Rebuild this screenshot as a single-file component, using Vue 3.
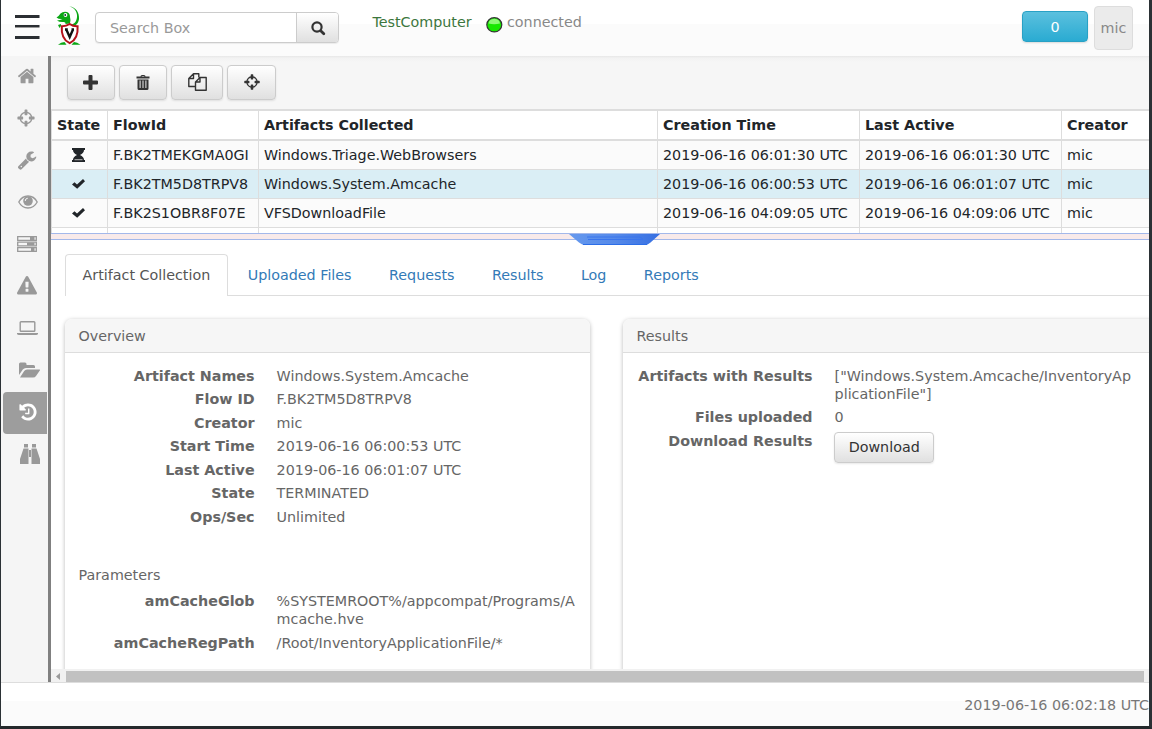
<script setup>
const icons = {
  home: '<path d="M1472 992v480q0 26-19 45t-45 19h-384v-384h-256v384h-384q-26 0-45-19t-19-45v-480q0-1 .5-3t.5-3l575-474 575 474q1 2 1 6zm223-69l-62 74q-8 9-21 11h-3q-13 0-21-7l-692-577-692 577q-12 8-24 7-13-2-21-11l-62-74q-8-10-7-23.5t11-21.5l719-599q32-26 76-26t76 26l244 204v-195q0-14 9-23t23-9h192q14 0 23 9t9 23v408l219 182q10 8 11 21.5t-7 23.5z"/>',
  target: '<path d="M1325 1024h-109q-26 0-45-19t-19-45v-128q0-26 19-45t45-19h109q-32-108-112.5-188.5t-188.5-112.5v109q0 26-19 45t-45 19h-128q-26 0-45-19t-19-45v-109q-108 32-188.5 112.5t-112.5 188.5h109q26 0 45 19t19 45v128q0 26-19 45t-45 19h-109q32 108 112.5 188.5t188.5 112.5v-109q0-26 19-45t45-19h128q26 0 45 19t19 45v109q108-32 188.5-112.5t112.5-188.5zm339-192v128q0 26-19 45t-45 19h-143q-37 161-154.5 278.5t-278.5 154.5v143q0 26-19 45t-45 19h-128q-26 0-45-19t-19-45v-143q-161-37-278.5-154.5t-154.5-278.5h-143q-26 0-45-19t-19-45v-128q0-26 19-45t45-19h143q37-161 154.5-278.5t278.5-154.5v-143q0-26 19-45t45-19h128q26 0 45 19t19 45v143q161 37 278.5 154.5t154.5 278.5h143q26 0 45 19t19 45z"/>',
  wrench: '<path d="M448 1472q0-26-19-45t-45-19-45 19-19 45 19 45 45 19 45-19 19-45zm644-420l-682 682q-37 37-90 37-52 0-91-37l-106-108q-38-36-38-90 0-53 38-91l681-681q39 98 114.5 173.5t173.5 114.5zm634-435q0 39-23 106-47 134-164.5 217.5t-258.5 83.5q-185 0-316.5-131.5t-131.5-316.5 131.5-316.5 316.5-131.5q58 0 121.5 16.5t107.5 46.5q16 11 16 28t-16 28l-293 169v224l193 107q5-3 79-48.5t135.5-81 70.5-35.5q15 0 23.5 10t8.5 25z"/>',
  warning: '<path d="M1024 1375v-190q0-14-9.5-23.5t-22.5-9.5h-192q-13 0-22.5 9.5t-9.5 23.5v190q0 14 9.5 23.5t22.5 9.5h192q13 0 22.5-9.5t9.5-23.5zm-2-374l18-459q0-12-10-19-13-11-24-11h-220q-11 0-24 11-10 7-10 21l17 457q0 10 10 16.5t24 6.5h185q14 0 23.5-6.5t10.5-16.5zm-14-934l768 1408q35 63-2 126-17 29-46.5 46t-63.5 17h-1536q-34 0-63.5-17t-46.5-46q-37-63-2-126l768-1408q17-31 47-49t65-18 65 18 47 49z"/>',
  history: '<path d="M1664 896q0 156-61 298t-164 245-245 164-298 61q-172 0-327-72.5t-264-204.5q-7-10-6.5-22.5t8.5-20.5l137-138q10-9 25-9 16 2 23 12 73 95 179 147t225 52q104 0 198.5-40.5t163.5-109.5 109.5-163.5 40.5-198.5-40.5-198.5-109.5-163.5-163.5-109.5-198.5-40.5q-98 0-188 35.5t-160 101.5l137 138q31 30 14 69-17 40-59 40h-448q-26 0-45-19t-19-45v-448q0-42 40-59 39-17 69 14l130 129q107-101 244.5-156.5t284.5-55.5q156 0 298 61t245 164 164 245 61 298zm-640-288v448q0 14-9 23t-23 9h-320q-14 0-23-9t-9-23v-64q0-14 9-23t23-9h224v-352q0-14 9-23t23-9h64q14 0 23 9t9 23z"/>',
  eye: '<path fill="none" stroke="currentColor" stroke-width="1.3" d="M.8 7Q4 1 10 1T19.2 7Q16 13 10 13T.8 7Z"/><circle cx="10" cy="6" r="4.8"/><path fill="none" stroke="#f5f5f5" stroke-width="1" d="M7.2 6A2.8 2.8 0 0 1 9.8 3.2"/>',
  server: '<path fill="none" stroke="currentColor" stroke-width="1.3" d="M.7.7H19.3V4.3H.7ZM.7 6.2H19.3V9.8H.7ZM.7 11.7H19.3V15.3H.7Z"/><path d="M13 1h4.5v3H13ZM10 6.5h7.5v3H10ZM14 12h3.5v3H14Z"/>',
  laptop: '<path fill="none" stroke="currentColor" stroke-width="1.4" d="M4 .8H17Q17.8.8 17.8 1.6V9.4Q17.8 10.2 17 10.2H4Q3.200 10.2 3.200 9.400V1.600Q3.200.8 4 .8Z"/><path d="M0 12H21V13Q20.500 14 19 14H2Q.5 14 0 13Z"/>',
  folder: '<path d="M0 13V2Q0 .5 1.500.5H6Q7.500.5 7.500 2V3H14.500Q16 3 16 4.500V6H7Q5 6 3.800 7.500L0 13Z"/><path d="M1 15.500L5.200 9Q6.200 7.500 8 7.500H20.500Q21.500 7.500 20.800 8.600L17 14Q16 15.500 14 15.500Z"/>',
  binoculars: '<path d="M4 0H8V3.500H4ZM12 0H16V3.500H12ZM3.500 4.500H8.500V20H0V15ZM11.500 4.500H16.500L20 15V20H11.500ZM9 6H11V13H9Z"/>',
  plus: '<path d="M5.500 1Q5.500 0 6.500 0H8.500Q9.500 0 9.500 1V5.500H14Q15 5.500 15 6.500V8.500Q15 9.500 14 9.500H9.500V14Q9.500 15 8.500 15H6.500Q5.500 15 5.500 14V9.500H1Q0 9.500 0 8.500V6.500Q0 5.500 1 5.500H5.500Z"/>',
  trash: '<path fill-rule="evenodd" d="M4.500 1.500Q4.500 0 6 0H8Q9.500 0 9.500 1.500H13.500V3.500H.5V1.500ZM5.700 1.500H8.300V1H5.700ZM1.500 4.500H12.500V13.500Q12.500 15 11 15H3Q1.500 15 1.500 13.500ZM3.600 5.500V13H4.600V5.500ZM6.500 5.500V13H7.500V5.500ZM9.400 5.500V13H10.400V5.500Z"/>',
  copy: '<path fill="none" stroke="currentColor" stroke-width="1.400" stroke-linejoin="round" d="M7 13.500H.8V5.500L5.500.8H10.800V4.500M5.500.8V5.500H.8M7.500 9L12 4.500H18.200V17.200H7.500ZM12 4.500V9H7.500"/>',
  check: '<path d="M0 5.500L2.500 3.200 5 5.500 11 0 13 2.200 5.200 9.800Z"/>',
  hourglass: '<path d="M0 0H13V2H12Q12 5 8 7 12 9 12 12H13V14H0V12H1Q1 9 5 7 1 5 1 2H0Z"/><path fill="#ccc" d="M2.500 11.300H10.500V12.200H2.500Z"/>',
  search: '<circle cx="6" cy="6" r="4.600" fill="none" stroke="currentColor" stroke-width="2.200"/><path stroke="currentColor" stroke-width="2.800" stroke-linecap="round" d="M9.700 9.700L12.800 12.800"/>',
}
const nav = [
  { id: 'home', box: '0 0 1792 1792', w: 20, h: 20 },
  { id: 'target', box: '0 0 1792 1792', w: 20, h: 20 },
  { id: 'wrench', box: '0 0 1792 1792', w: 20, h: 20 },
  { id: 'eye', box: '0 0 20 14', w: 20, h: 14 },
  { id: 'server', box: '0 0 20 16', w: 20, h: 16 },
  { id: 'warning', box: '0 0 1792 1792', w: 20, h: 20 },
  { id: 'laptop', box: '0 0 21 14', w: 21, h: 14 },
  { id: 'folder', box: '0 0 21 16', w: 21, h: 16 },
  { id: 'history', box: '0 0 1792 1792', w: 20, h: 20, active: true },
  { id: 'binoculars', box: '0 0 20 20', w: 20, h: 20 },
]
const tools = [
  { id: 'plus', box: '0 0 15 15', w: 15, h: 15 },
  { id: 'trash', box: '0 0 14 15', w: 14, h: 15 },
  { id: 'copy', box: '0 0 19 18', w: 19, h: 18 },
  { id: 'target', box: '0 0 1792 1792', w: 18, h: 18 },
]
const heads = ['State', 'FlowId', 'Artifacts Collected', 'Creation Time', 'Last Active', 'Creator']
const rows = [
  { icon: 'hourglass', cells: ['F.BK2TMEKGMA0GI', 'Windows.Triage.WebBrowsers', '2019-06-16 06:01:30 UTC', '2019-06-16 06:01:30 UTC', 'mic'] },
  { icon: 'check', on: true, cells: ['F.BK2TM5D8TRPV8', 'Windows.System.Amcache', '2019-06-16 06:00:53 UTC', '2019-06-16 06:01:07 UTC', 'mic'] },
  { icon: 'check', cells: ['F.BK2S1OBR8F07E', 'VFSDownloadFile', '2019-06-16 04:09:05 UTC', '2019-06-16 04:09:06 UTC', 'mic'] },
]
const tabs = ['Uploaded Files', 'Requests', 'Results', 'Log', 'Reports']
const overview = [
  ['Artifact Names', 'Windows.System.Amcache'],
  ['Flow ID', 'F.BK2TM5D8TRPV8'],
  ['Creator', 'mic'],
  ['Start Time', '2019-06-16 06:00:53 UTC'],
  ['Last Active', '2019-06-16 06:01:07 UTC'],
  ['State', 'TERMINATED'],
  ['Ops/Sec', 'Unlimited'],
]
const params = [
  ['amCacheGlob', '%SYSTEMROOT%/appcompat/Programs/Amcache.hve'],
  ['amCacheRegPath', '/Root/InventoryApplicationFile/*'],
]
</script>

<template>
  <div class="window">
    <header>
      <svg class="burger" width="25" height="24" viewBox="0 0 25 24"><path fill="#2b2f33" d="M0 0H24.500V3H0ZM0 10H24.500V12H0ZM0 21H24.500V24H0Z" /><path fill="#999" d="M0 12H24.500V13H0Z" /></svg>
      <svg class="logo" width="26" height="40" viewBox="0 0 26 40">
        <path fill="#0aa614" d="M13 .3C20 1 23.500 7 23 13 22.500 17.500 19.500 20 16.500 20.500L16 18.500C20 17 21.300 13 21 9 20.500 4.500 17.500 1.500 13 .3Z" />
        <path fill="#0aa614" d="M.5 11.500Q3 10 4.500 7.500 7 5.200 11 6 14 7 14 11 15 14 14 17.500L9.500 18Q10 16.500 8 16 3.500 16.500 1 14.500Q4 14 6.500 13Q3 13.500.5 11.500Z" />
        <circle cx="9.500" cy="9" r="1.900" fill="#fff" /><circle cx="9.200" cy="9" r=".9" fill="#123" />
        <path fill="#0aa614" d="M2 19L5 18V20L3.500 22ZM2 38.700Q5 36 8.500 36L10.500 38.700ZM24.500 38.700Q21 36 18 36L15.500 38.700Z" />
        <path fill="#fff" stroke="#b5121b" stroke-width="2" d="M5.800 20.300Q10 20.500 13.700 18Q17 20.500 21.600 20.300Q22.500 33 13.700 37.200Q4.800 33 5.800 20.300Z" />
        <path fill="none" stroke="#111" stroke-width="2.400" d="M10.300 23.500L13.700 31 17 23.500M9 23.500H11.800M15.500 23.500H18" />
      </svg>
      <div class="search"><span>Search Box</span><button class="btn"><svg width="15" height="15" viewBox="0 0 15 15" v-html="icons.search"></svg></button></div>
      <span class="client">TestComputer</span>
      <svg class="led" width="17" height="16" viewBox="0 0 17 16">
        <ellipse cx="8.300" cy="7.800" rx="7.500" ry="7.100" fill="#18e800" stroke="#333" stroke-width="1.200" />
        <path fill="#8dfa75" d="M2.500 6.500Q3 2 8.300 1.700 13.500 2 14 6.500 8 8 2.500 6.500Z" />
      </svg>
      <span class="status">connected</span>
      <button class="badge">0</button>
      <div class="user">mic</div>
    </header>
    <div class="middle">
      <nav>
        <a v-for="n in nav" :key="n.id" :class="['item', n.id, { active: n.active }]"><svg :width="n.w" :height="n.h" :viewBox="n.box" v-html="icons[n.id]"></svg></a>
      </nav>
      <main>
        <div class="toolbar">
          <button v-for="t in tools" :key="t.id" :class="['btn', t.id]"><svg :width="t.w" :height="t.h" :viewBox="t.box" v-html="icons[t.id]"></svg></button>
        </div>
        <div class="grid">
          <div class="row head"><div v-for="h in heads" :key="h">{{ h }}</div></div>
          <div v-for="r in rows" :key="r.cells[0]" :class="['row', { on: r.on }]">
            <div class="state">
              <svg v-if="r.icon === 'check'" width="13" height="10" viewBox="0 0 13 10" v-html="icons.check"></svg>
              <svg v-else width="13" height="14" viewBox="0 0 13 14" v-html="icons.hourglass"></svg>
            </div>
            <div v-for="(c, i) in r.cells" :key="i">{{ c }}</div>
          </div>
          <div class="row rest"><div v-for="h in heads" :key="h"></div></div>
        </div>
        <div class="splitter">
          <svg width="92" height="12" viewBox="0 0 92 12">
            <defs><linearGradient id="grip" x1="0" x2="1" y1="0" y2="0"><stop offset="0" stop-color="#6699ee" /><stop offset=".5" stop-color="#568ae9" /><stop offset="1" stop-color="#366fe2" /></linearGradient></defs>
            <path fill="url(#grip)" d="M0 0H91L81.500 8.500Q79 11 75 11H17Q13 11 10 8.500Z" />
            <path fill="none" stroke="#3975ee" d="M18 3H69Q73.500 3 73.500 5.500H19" /><path stroke="#2c6ee8" d="M14 10.500H78" />
          </svg>
        </div>
        <section class="detail">
          <div class="tabs"><a class="current">Artifact Collection</a><a v-for="t in tabs" :key="t">{{ t }}</a></div>
          <div class="cards">
            <article>
              <h2>Overview</h2>
              <dl><template v-for="[k, v] in overview" :key="k"><dt>{{ k }}</dt><dd>{{ v }}</dd></template></dl>
              <h3>Parameters</h3>
              <dl class="params"><template v-for="[k, v] in params" :key="k"><dt>{{ k }}</dt><dd>{{ v }}</dd></template></dl>
            </article>
            <article>
              <h2>Results</h2>
              <dl>
                <dt>Artifacts with Results</dt><dd>["Windows.System.Amcache/InventoryApplicationFile"]</dd>
                <dt>Files uploaded</dt><dd>0</dd>
                <dt>Download Results</dt><dd><button class="btn download">Download</button></dd>
              </dl>
            </article>
          </div>
        </section>
        <div class="scroll"><svg width="15" height="13" viewBox="0 0 15 13"><path fill="#999" d="M9 4V11L5 7.500Z" /></svg><div class="thumb"></div></div>
      </main>
    </div>
    <footer>2019-06-16 06:02:18 UTC</footer>
  </div>
</template>

<style>
body { margin: 0; overflow: hidden; }
</style>
<style scoped>
* { box-sizing: border-box; }
.window { width: 1152px; height: 729px; border: solid #2b3135; border-width: 0 3px 3px 1px; border-bottom-color: #24292b; display: flex; flex-direction: column; overflow: hidden; background: #fff; font: 14.3px/18px "DejaVu Sans", sans-serif; color: #666; }
svg { display: block; fill: currentColor; flex: none; }
button { font: inherit; letter-spacing: inherit; padding: 0; }
header { height: 56px; flex: none; display: flex; align-items: flex-start; background: linear-gradient(#fff 24px, #fbfbfb 24px); }
.burger { margin: 15px 0 0 13.500px; }
.logo { margin: 6px 0 0 16px; }
.search { margin: 12px 0 0 13.500px; width: 244px; height: 31px; display: flex; justify-content: space-between; border: 1px solid #ccc; border-radius: 4px; background: #fff; color: #999; line-height: 31px; padding-left: 14px; box-shadow: 0 1px 1px #0001; }
.btn { display: flex; align-items: center; justify-content: center; color: #333; border: 1px solid #ccc; border-radius: 4px; background: linear-gradient(#fff, #e0e0e0); box-shadow: 0 1px 2px #00000018; }
.search .btn { width: 42px; height: 29px; border-width: 0 0 0 1px; border-radius: 0 3px 3px 0; padding: 2px 0 0 1px; box-shadow: none; }
.client { color: #3c763d; margin: 13px 0 0 33.400px; width: 99.600px; }
.led { margin: 17px 0 0 14px; }
.status { margin: 13px 0 0 4px; color: #888; }
.badge { margin: 11px 0 0 auto; width: 66px; height: 31px; border: 1px solid #28a1c5; border-radius: 4px; background: linear-gradient(#5bc0de, #2aabd2); color: #fff; box-shadow: 0 1px 2px #0002; }
.user { margin: 6px 16px 0 6px; width: 39px; height: 44px; border: 1px solid #ddd; border-radius: 4px; background: #ebebeb; color: #888; text-align: center; line-height: 43px; }
.middle { height: 626px; flex: none; display: flex; }
nav { width: 50px; flex: none; background: #f5f5f5; border-right: 3px solid #808080; color: #999; }
.item { height: 42px; margin: 0 1px 0 2px; display: flex; align-items: center; justify-content: center; padding: 0 0 2px 3px; }
.item.target { padding: 0 0 2px 1px; }
.item.eye { padding-left: 5px; }
.item.server { padding: 0 0 3px 4px; }
.item.laptop { padding-left: 5px; }
.item.folder { padding: 0 0 3px 8px; }
.item.binoculars { padding-left: 9px; }
.item.history { padding-left: 5px; }
.active { background: #9d9d9d; color: #fff; border-radius: 4px 0 0 4px; }
main { flex: 1; min-width: 0; display: flex; flex-direction: column; }
.toolbar { height: 53px; flex: none; padding: 9px 0 0 16px; display: flex; gap: 4px; background: linear-gradient(#e7e7e7 0, #f2f2f2 2px, #f6f6f6 6px); }
.toolbar .btn { width: 48px; height: 35px; padding: 0 1px 1px 0; }
.toolbar .copy { width: 52px; padding-right: 0; }
.toolbar .target { width: 49px; padding-right: 0; }
.grid { height: 124px; flex: none; overflow: hidden; color: #212529; border-top: 2px solid #ddd; }
.row { display: grid; grid-template-columns: 57px 151px 399px 202px 202px 1fr; height: 29px; border-bottom: 1px solid #ddd; background: #fbfbfb; }
.row > div { border-right: 1px solid #ddd; padding-left: 5px; line-height: 28px; white-space: nowrap; }
.row > div:first-child { border-left: 1px solid #ddd; }
.row > div:last-child { border-right: 0; }
.row.head { height: 30px; border-bottom-width: 2px; background: #fff; font-weight: bold; }
.row.on { background: #daeef5; }
.row > .state:first-child { display: flex; align-items: center; justify-content: center; padding: 0 2px 0 0; }
.rest { background: #fff; }
.splitter { height: 7px; flex: none; border: 1px solid #a3b8ea; border-width: 1px 0; background: #f8eaea; padding-left: 518px; position: relative; z-index: 1; }
.detail { height: 429px; flex: none; overflow: hidden; padding: 14px 0 0 14px; }
.tabs { height: 42px; display: flex; border-bottom: 1px solid #ddd; color: #337ab7; }
.tabs a { padding: 12px 18px 0; margin-right: 1.400px; white-space: nowrap; }
.tabs .current { width: 163px; height: 42px; margin-right: 1.700px; padding: 11px 0 0 16.500px; border: 1px solid #ddd; border-bottom: 0; border-radius: 4px 4px 0 0; background: #fff; color: #555; }
.cards { display: flex; gap: 33px; margin-top: 23px; }
article { width: 525px; height: 420px; flex: none; border-radius: 7px; box-shadow: 0 1px 4px #00000048; background: #fff; }
article:last-child { width: 540px; }
h2 { margin: 0; height: 34px; padding-left: 13.500px; font: inherit; line-height: 35px; background: #f6f6f6; border-bottom: 1px solid #ddd; border-radius: 7px 7px 0 0; }
h3 { margin: 0; font: inherit; padding: 40px 0 0 13.500px; }
dl { margin: 13.800px 0 0; display: grid; grid-template-columns: 189.600px 301px; column-gap: 22px; row-gap: 5.500px; }
dl.params { margin-top: 8.300px; }
dt { font-weight: bold; text-align: right; }
dd { margin: 0; overflow-wrap: anywhere; word-break: break-all; }
.download { width: 100px; height: 31px; margin-left: -.4px; }
.scroll { height: 13px; flex: none; display: flex; background: #f1f1f1; }
.thumb { width: 1078px; height: 11px; margin-top: 2px; background: #c1c1c1; }
footer { height: 44px; flex: none; border-top: 1px solid #ddd; background: linear-gradient(#fff 18px, #fbfbfb 18px); text-align: right; line-height: 45px; color: #777; }
</style>
